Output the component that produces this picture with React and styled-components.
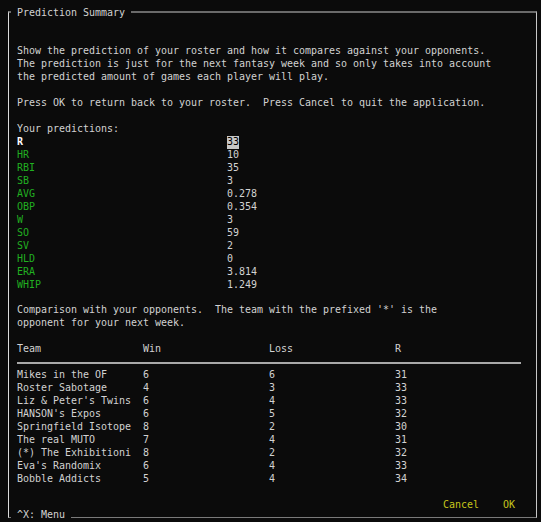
import React from "react";
import styled, { createGlobalStyle } from "styled-components";

const ROW = 12.96;
const COL = 6;
const BG = "#0b0b0b";

const GlobalStyle = createGlobalStyle`
  html, body {
    margin: 0;
    background: ${BG};
  }
  body {
    font-family: "DejaVu Sans Mono", "Liberation Mono", monospace;
    font-size: 9.97px;
    color: #d2d2d2;
  }
`;

const Frame = styled.div`
  box-sizing: border-box;
  width: 529px;
  margin: 11px 0 0 8px;
  padding-left: 8px;
  border-top: 2px solid #6a6a6a;
  border-bottom: 1px solid #7a7a7a;
  border-left: 1px solid #dcdcdc;
  border-right: 1px solid #c8c8c8;
  display: flex;
  flex-direction: column;
`;

const EdgeLabel = styled.div`
  align-self: flex-start;
  height: ${ROW}px;
  line-height: ${ROW}px;
  margin-left: -6px;
  padding: 0 6px;
  background: ${BG};
  white-space: pre;
  margin-top: ${(p) => (p.$top ? "-6.5px" : "-3px")};
  margin-bottom: ${(p) => (p.$bottom ? "-4.9px" : "0")};
`;

const Line = styled.div`
  height: ${ROW}px;
  line-height: ${ROW}px;
  white-space: pre;
`;

const Gap = styled.div`
  height: ${(p) => p.$rows * ROW}px;
`;

const StatRow = styled.div`
  display: flex;
  height: ${ROW}px;
  line-height: ${ROW}px;
`;

const StatName = styled.span`
  width: ${35 * COL}px;
  color: ${(p) => (p.$lead ? "#ffffff" : "#21b021")};
  font-weight: ${(p) => (p.$lead ? "bold" : "normal")};
`;

const Cursor = styled.span`
  background: #c8c8c8;
  color: #000;
`;

const TableRow = styled.div`
  display: flex;
  height: ${ROW}px;
  line-height: ${ROW}px;
  white-space: pre;
`;

const Cell = styled.span`
  width: ${21 * COL}px;
`;

const RuleRow = styled.div`
  display: flex;
  align-items: center;
  height: ${ROW}px;
`;

const RuleLine = styled.div`
  width: ${84 * COL}px;
  height: 2px;
  background: #a9a9a9;
`;

const Actions = styled.div`
  display: flex;
  justify-content: flex-end;
  gap: ${4 * COL}px;
  padding-right: 21px;
  height: ${ROW}px;
  line-height: ${ROW}px;
`;

const Action = styled.span`
  color: #c6c61c;
`;

const stats = [
  ["R", "33"],
  ["HR", "10"],
  ["RBI", "35"],
  ["SB", "3"],
  ["AVG", "0.278"],
  ["OBP", "0.354"],
  ["W", "3"],
  ["SO", "59"],
  ["SV", "2"],
  ["HLD", "0"],
  ["ERA", "3.814"],
  ["WHIP", "1.249"],
];

const teams = [
  ["Mikes in the OF", 6, 6, 31],
  ["Roster Sabotage", 4, 3, 33],
  ["Liz & Peter's Twins", 6, 4, 33],
  ["HANSON's Expos", 6, 5, 32],
  ["Springfield Isotope", 8, 2, 30],
  ["The real MUTO", 7, 4, 31],
  ["(*) The Exhibitioni", 8, 2, 32],
  ["Eva's Randomix", 6, 4, 33],
  ["Bobble Addicts", 5, 4, 34],
];

const App = () => {
  return (
    <>
      <GlobalStyle />
      <Frame>
        <EdgeLabel $top>Prediction Summary</EdgeLabel>
        <Gap $rows={2} />
        <Line>Show the prediction of your roster and how it compares against your opponents.</Line>
        <Line>The prediction is just for the next fantasy week and so only takes into account</Line>
        <Line>the predicted amount of games each player will play.</Line>
        <Gap $rows={1} />
        <Line>Press OK to return back to your roster.  Press Cancel to quit the application.</Line>
        <Gap $rows={1} />
        <Line>Your predictions:</Line>
        {stats.map(([name, value], i) => (
          <StatRow key={name}>
            <StatName $lead={i === 0}>{name}</StatName>
            {i === 0 ? <Cursor>{value}</Cursor> : <span>{value}</span>}
          </StatRow>
        ))}
        <Gap $rows={1} />
        <Line>Comparison with your opponents.  The team with the prefixed '*' is the</Line>
        <Line>opponent for your next week.</Line>
        <Gap $rows={1} />
        <TableRow>
          <Cell>Team</Cell>
          <Cell>Win</Cell>
          <Cell>Loss</Cell>
          <span>R</span>
        </TableRow>
        <RuleRow>
          <RuleLine />
        </RuleRow>
        {teams.map(([team, win, loss, runs]) => (
          <TableRow key={team}>
            <Cell>{team}</Cell>
            <Cell>{win}</Cell>
            <Cell>{loss}</Cell>
            <span>{runs}</span>
          </TableRow>
        ))}
        <Gap $rows={1} />
        <Actions>
          <Action>Cancel</Action>
          <Action>OK</Action>
        </Actions>
        <EdgeLabel $bottom>^X: Menu</EdgeLabel>
      </Frame>
    </>
  );
};

export default App;
